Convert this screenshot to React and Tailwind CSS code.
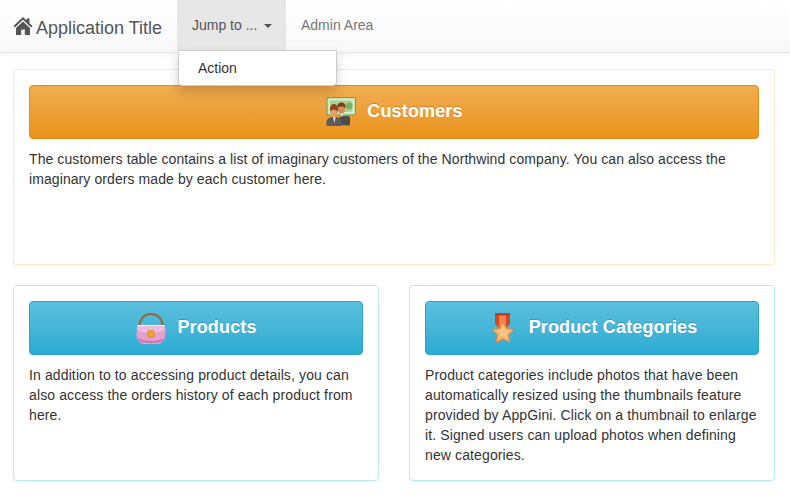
const FONT = "font-['Liberation_Sans',Arial,sans-serif]";

function CustomersIcon() {
  return (
    <svg width="32" height="32" viewBox="0 0 32 32" className="shrink-0">
      <rect x="2" y="1.500" width="28.500" height="17.500" fill="#c7e4b2" stroke="#6f9f5e" />
      <rect x="4.500" y="4" width="23.500" height="12.500" fill="#a9d394" stroke="#e1f2d6" />
      <circle cx="24" cy="10" r="3.500" fill="#7bb066" />
      <path d="M12 29v-4c0-2 2-3 4-4h7c3 1 2 1 2 3v5l-1 .5z" fill="#555" />
      <path d="M14 28v-5c0-2 3-3 5-3h4c2 1 2 1 2 2v7z" fill="#4d4d4d" />
      <path d="M1.500 30v-4c0-3 2-4 5-5h5c3 1 5 2 5 5v4z" fill="#5c5c5c" />
      <path d="M8 21h2.500l-1 6z" fill="#eee" />
      <path d="M15.500 17h3l-1.500 4z" fill="#eee" />
      <ellipse cx="16.500" cy="12.500" rx="3.800" ry="5.200" fill="#d08f58" />
      <path d="M12.500 12c-.5-4 1.500-5.500 4-5.500s4.500 1.500 4 5.500c-1.500-2-6.500-2-8 0z" fill="#7b3f17" />
      <ellipse cx="9" cy="15.500" rx="4" ry="5.500" fill="#dfa06a" />
      <path d="M5 15.500C4.500 10 6.500 8 9 8s4.500 2 4 7.500c-1.500-2.500-6.500-2.500-8 0z" fill="#8a4a1c" />
    </svg>
  );
}

function BagIcon() {
  return (
    <svg width="32" height="32" viewBox="0 0 32 32" className="shrink-0">
      <path d="M4 14C5.500 6 10 2 16 2s10.500 4 12 12" fill="none" stroke="#96673a" strokeWidth="2" />
      <path d="M2.500 13h27l1 8c.5 6-3 11-8 11H9.500c-5 0-8.500-5-8-11z" fill="#e59fce" />
      <path d="M2.500 13h27l.6 5c-7 4-21.200 4-28.200 0z" fill="#efbbdd" />
      <path d="M3 13.500h26" stroke="#fff" strokeWidth="1" />
      <path d="M3.500 27c4 4 21 4 25 0" stroke="#c878af" strokeWidth="2" fill="none" />
      <rect x="13" y="19" width="6" height="6" rx="1" fill="#f5a623" stroke="#d9861a" />
    </svg>
  );
}

function MedalIcon() {
  return (
    <svg width="32" height="32" viewBox="0 0 32 32" className="shrink-0">
      <path d="M8 1h15v11l-7.500 6L8 12z" fill="#d9481c" />
      <path d="M12 2h7v13h-7z" fill="#f08350" />
      <path d="M8 1h15v2.500H8z" fill="#c23c14" />
      <path
        d="M16 9.500l3.400 6.900 7.600 1.100-5.500 5.300 1.300 7.600-6.800-3.600-6.800 3.600 1.300-7.600-5.500-5.300 7.600-1.100z"
        fill="#fbb56b"
        stroke="#e9853a"
      />
      <path d="M16 14l1.800 4 4.200.6-3 3 .7 4-3.700-2-3.700 2 .7-4-3-3 4.200-.6z" fill="#fcc58a" />
    </svg>
  );
}

function Card({ tone, title, icon, textClass, children }) {
  const styles =
    tone === "warning"
      ? {
          card: "border-[#faebcc]",
          button: "border-[#e38d13] bg-gradient-to-b from-[#f0ad4e] to-[#eb9316]",
        }
      : {
          card: "border-[#bce8f1]",
          button: "border-[#28a4c9] bg-gradient-to-b from-[#5bc0de] to-[#2aabd2]",
        };
  return (
    <section
      className={`h-[196px] rounded border bg-white p-[15px] shadow-[0_1px_1px_rgba(0,0,0,0.05)] ${styles.card}`}
    >
      <div
        className={`flex h-[54px] items-center justify-center gap-[10px] rounded border text-lg font-bold tracking-[0.15px] text-white [text-shadow:0_-1px_0_rgba(0,0,0,0.2)] ${styles.button}`}
      >
        {icon}
        <span className="pb-[2px]">{title}</span>
      </div>
      <p className={`mt-[10px] text-sm leading-5 text-[#333] ${textClass}`}>{children}</p>
    </section>
  );
}

export default function App() {
  return (
    <div className={`relative min-h-[495px] w-[790px] overflow-hidden bg-white ${FONT}`}>
      <nav className="flex h-[53px] items-start border-b border-[#e7e7e7] bg-gradient-to-b from-white to-[#f8f8f8] shadow-[0_1px_5px_rgba(0,0,0,0.075)]">
        <a className="flex h-[52px] w-[177px] items-center pl-[13px] pt-[3px] text-lg text-[#555]">
          <svg width="20" height="20" viewBox="0 0 20 20" className="mr-[3px] mb-[4px] shrink-0" fill="#555">
            <path d="M10 1L0.500 10 1.800 11.500 10 3.800l8.200 7.700 1.300-1.500L16.500 7.200V2.500h-3v2z" />
            <path d="M10 5.500L3 12v7h5.200v-5.500h3.600V19H17v-7z" />
          </svg>
          <span>Application Title</span>
        </a>
        <a className="flex h-[50px] w-[109px] items-center bg-[#e7e7e7] pb-[1px] pl-[15px] text-sm text-[#555]">
          Jump to ...
          <span className="ml-[7px] mt-[2px] h-0 w-0 border-x-4 border-t-4 border-x-transparent border-t-[#555]" />
        </a>
        <a className="flex h-[50px] items-center pb-[1px] pl-[15px] text-sm text-[#777]">Admin Area</a>
      </nav>

      <div className="absolute left-[178px] top-[50px] z-10 h-[36px] w-[159px] rounded-b border border-[#ccc] bg-white pl-[19px] pt-[7px] text-sm leading-5 text-[#333] shadow-[0_6px_12px_rgba(0,0,0,0.175)]">
        Action
      </div>

      <main className="flex flex-col gap-5 pl-[13px] pr-[15px] pt-4">
        <Card tone="warning" title="Customers" icon={<CustomersIcon />} textClass="tracking-[0.085px]">
          The customers table contains a list of imaginary customers of the Northwind company. You can also access the
          imaginary orders made by each customer here.
        </Card>
        <div className="grid grid-cols-2 gap-[30px]">
          <Card tone="info" title="Products" icon={<BagIcon />} textClass="tracking-[0.12px]">
            In addition to to accessing product details, you can also access the orders history of each product from
            here.
          </Card>
          <Card tone="info" title="Product Categories" icon={<MedalIcon />} textClass="tracking-[0.12px]">
            Product categories include photos that have been automatically resized using the thumbnails feature
            provided by AppGini. Click on a thumbnail to enlarge it. Signed users can upload photos when defining new
            categories.
          </Card>
        </div>
      </main>
    </div>
  );
}
